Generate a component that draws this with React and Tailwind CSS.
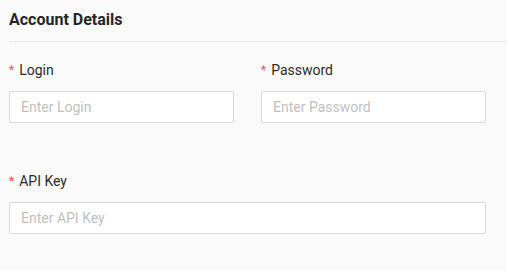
export default function App() {
  const font = { fontFamily: "Roboto, 'Liberation Sans', sans-serif" };
  return (
    <div className="min-h-[271px] w-[507px] bg-[#fafafa] pl-[9px]" style={font}>
      <div className="border-b border-[#e8e8e8] pt-2 pb-[9px]">
        <h2 className="text-[16px] leading-6 font-bold text-[#262626]">Account Details</h2>
      </div>
      <div className="pr-[21px] pt-[17px]">
        <div className="grid grid-cols-2 gap-x-[27px]">
          <Field label="Login" placeholder="Enter Login" />
          <Field label="Password" placeholder="Enter Password" />
        </div>
        <div className="mt-[47px]">
          <Field label="API Key" placeholder="Enter API Key" />
        </div>
      </div>
    </div>
  );
}

function Field({ label, placeholder }) {
  return (
    <div>
      <label className="flex items-center h-[22px] text-[14px] text-[#2b2b2b]">
        <span className="text-[#ff4d4f] text-[12px] mr-[5px] leading-none">*</span>
        {label}
      </label>
      <input
        type="text"
        placeholder={placeholder}
        className="mt-[10px] block w-full h-8 bg-white border border-[#d9d9d9] rounded-[2px] px-[11px] text-[14px] placeholder:text-[#bfbfbf] outline-none"
      />
    </div>
  );
}
